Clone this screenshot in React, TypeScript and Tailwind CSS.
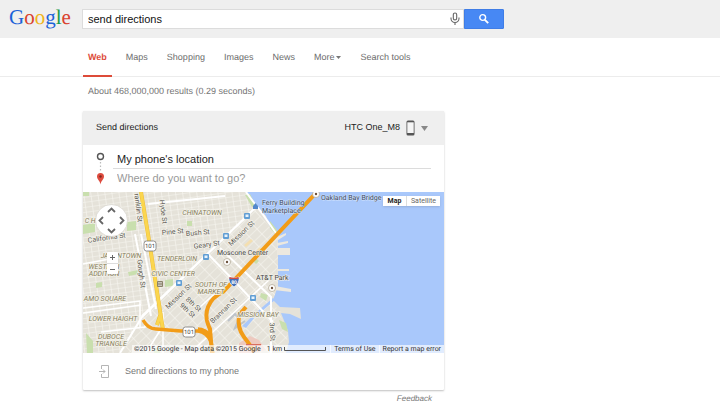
import React from "react";

interface Tab {
  label: string;
  active?: boolean;
  dropdown?: boolean;
}

interface MapLabel {
  text: string;
  x: number;
  y: number;
  rotate?: number;
}

const tabs: Tab[] = [
  { label: "Web", active: true },
  { label: "Maps" },
  { label: "Shopping" },
  { label: "Images" },
  { label: "News" },
  { label: "More", dropdown: true },
  { label: "Search tools" },
];

// Districts are drawn in italic olive
const districts: MapLabel[] = [
  { text: "CHINATOWN", x: 119, y: 23 },
  { text: "TENDERLOIN", x: 94, y: 69 },
  { text: "JAPANTOWN", x: 38, y: 66 },
  { text: "WESTERN", x: 21, y: 77 },
  { text: "ADDITION", x: 21, y: 84 },
  { text: "CIVIC CENTER", x: 90, y: 84 },
  { text: "SOUTH OF", x: 128, y: 95 },
  { text: "MARKET", x: 128, y: 102 },
  { text: "AMO SQUARE", x: 22, y: 109 },
  { text: "LOWER HAIGHT", x: 30, y: 129 },
  { text: "DUBOCE", x: 28, y: 147 },
  { text: "TRIANGLE", x: 28, y: 154 },
  { text: "MISSION BAY", x: 175, y: 125 },
  { text: "C HEI", x: 10, y: 31 },
];

const streets: MapLabel[] = [
  { text: "ranklin St", x: 53, y: 16, rotate: 83 },
  { text: "Hyde St", x: 78, y: 20, rotate: 83 },
  { text: "Gough St", x: 56, y: 82, rotate: 83 },
  { text: "Pine St", x: 90, y: 42, rotate: -5 },
  { text: "Bush St", x: 115, y: 43, rotate: -5 },
  { text: "Geary St", x: 124, y: 55, rotate: -8 },
  { text: "California St", x: 24, y: 48, rotate: -8 },
  { text: "Mission St", x: 160, y: 43, rotate: -44 },
  { text: "Mission St", x: 97, y: 106, rotate: -44 },
  { text: "Brannan St", x: 142, y: 120, rotate: -44 },
  { text: "8th St", x: 109, y: 114, rotate: 42 },
  { text: "9th St", x: 103, y: 120, rotate: 42 },
  { text: "3rd St", x: 187, y: 140, rotate: 87 },
];

const transitStops = [
  [164, 24],
  [143, 44],
  [123, 65],
  [96, 91],
  [170, 106],
];

const GoogleLogo = () => (
  <a
    href="#"
    aria-label="Google"
    className="block w-[82px] shrink-0 pb-[3px] pl-[9px] font-['Liberation_Serif',serif] text-[21px] leading-[35px]"
  >
    <span className="text-[#1b62d8]">G</span>
    <span className="text-[#d9422f]">o</span>
    <span className="text-[#f0b51c]">o</span>
    <span className="text-[#1b62d8]">g</span>
    <span className="text-[#1a9a4b]">l</span>
    <span className="text-[#d9422f]">e</span>
  </a>
);

const SearchBar = () => (
  <header className="flex h-[38px] items-center bg-[#efefef]">
    <GoogleLogo />
    <form className="flex h-5 min-w-0 grow pr-4" onSubmit={(e) => e.preventDefault()}>
      <div className="flex w-full max-w-[382px] items-center border border-[#dcdcdc] bg-white">
        <input
          type="text"
          aria-label="Search"
          defaultValue="send directions"
          className="min-w-0 grow pl-[5px] text-[11px] leading-4 text-[#111] outline-none"
        />
        <button type="button" aria-label="Search by voice" className="flex w-4 justify-center">
          <svg width="10" height="14" viewBox="0 0 10 14" fill="none" stroke="#666" strokeWidth="1.1">
            <rect x="3.3" y="1" width="3.4" height="7" rx="1.7" />
            <path d="M1 5.500v1a4 4 0 0 0 8 0v-1M5 10.500V13" />
          </svg>
        </button>
      </div>
      <button
        type="submit"
        aria-label="Google Search"
        className="flex w-10 shrink-0 items-center justify-center rounded-r-[1px] border border-[#3f7de6] bg-[#4788f4]"
      >
        <svg width="12" height="12" viewBox="0 0 12 12" fill="none" stroke="#fff">
          <circle cx="4.700" cy="4.500" r="2.900" strokeWidth="1.400" />
          <path d="M6.900 6.800l3.300 3.400" strokeWidth="1.900" />
        </svg>
      </button>
    </form>
  </header>
);

const Navigation = () => (
  <nav className="flex h-[39px] gap-[9px] border-b border-[#ececec] pl-[83px] text-[9px] text-[#6c6c6c]">
    {tabs.map((tab) => (
      <a
        key={tab.label}
        href="#"
        className={
          tab.active
            ? "flex h-[39px] items-center border-b-2 border-[#dd4b39] px-[5px] pt-[2px] font-bold text-[#dd4b39]"
            : "flex h-[39px] items-center border-b-2 border-transparent px-[5px] pt-[2px]"
        }
      >
        {tab.label}
        {tab.dropdown && (
          <svg className="ml-[2px]" width="5" height="3" viewBox="0 0 5 3">
            <path d="M0 0h5L2.500 3z" fill="#777" />
          </svg>
        )}
      </a>
    ))}
  </nav>
);

const MapDrawing = () => (
  <svg
    className="block h-full w-full"
    viewBox="0 0 361 161"
    preserveAspectRatio="xMinYMin slice"
    fontFamily="Roboto, sans-serif"
    role="img"
    aria-label="Map of San Francisco"
  >
    <defs>
      <pattern id="blocks" width="7" height="5" patternUnits="userSpaceOnUse" patternTransform="rotate(-8)">
        <path d="M0 0h7M0 0v5" stroke="#f8f7f2" strokeWidth="1.2" />
      </pattern>
      <pattern id="soma" width="11" height="7" patternUnits="userSpaceOnUse" patternTransform="rotate(-44)">
        <path d="M0 0h11M0 0v7" stroke="#f8f7f2" strokeWidth="1.2" />
      </pattern>
    </defs>

    {/* water and land */}
    <rect width="361" height="161" fill="#a9c8fb" />
    <path
      d="M0 0H163L168 10L174 14L183 24L186 33L192 38L195 46V94L190 108L197 115L217 116L218 127L207 122L198 121L202 131L205 139L206 150L203 161H0Z"
      fill="#e5e2d9"
    />
    <path d="M0 0H163L174 17L57 127L40 161H0Z" fill="url(#blocks)" />
    <path d="M57 127L172 17L195 46V94L190 108L205 140L203 161H40Z" fill="url(#soma)" />
    <g fill="#ece8df">
      <path d="M194 45l9-4v2l-8 5zM194 51l11-2v2l-11 3zM194 56h13v7h-13zM194 77h12v2h-12zM194 86h9v2h-9zM192 94l16 3v3l-17-2z" />
    </g>

    {/* parks */}
    <g fill="#c9dfae">
      <path d="M0 33l12-2v9l-12 2zM44 30l9-1v9l-9 1zM45 80l10-2v4l-9 2zM13 91l6-1v5l-6 1zM82 88l8-1v7l-8 1zM104 29h5v5h-5zM178 101l7 2-2 6-6-4zM3 141l7 8v12h-6zM162 3l5-1 6 12-4 1zM0 0h6v4H0zM187 29l7 9v6l-7-8z" />
      <path d="M196 128l7 3 2 9-6-3zM170 69l3-3 3 3-3 3zM71 156h6v5h-6z" />
    </g>
    <path d="M156 151l11-7 9 4 7 10-12 3h-15z" fill="#edc9bf" />
    <path d="M161 53l7-6 2 2-7 6zM172 60l5-5 2 2-5 5z" fill="#f4dfb0" />
    <path d="M159 134l17-16 14-12 2 2-20 17-9 11z" fill="#a9c8fb" />
    <path d="M145 129l7-7 4 5-4 9 10-7" fill="none" stroke="#bdc3c9" strokeWidth="2" />

    {/* main streets */}
    <g fill="none" stroke="#fff" strokeWidth="2">
      <path d="M37 161L59 125L110 76L172 16M163 0l18 24 14 20M125 62l31 32 34 36M137 56l51 49v56M59 124L162 26M65 12l77-8M52 42l16 82M58 42l15 75" />
      <path d="M0 116l57-7v26M0 121l58-8M18 140l44-5v-7M80 120v41M63 161l15-24M107 161l79-73M116 116l24-22M0 72l58-11" strokeWidth="1.500" />
    </g>

    {/* highways */}
    <path d="M58 0l7 42 15 96M78 121l-4 12" fill="none" stroke="#edbd3d" strokeWidth="4" />
    <path d="M58 0l7 42 15 96M78 121l-4 12" fill="none" stroke="#fbd64e" strokeWidth="3" />
    <g fill="none" stroke="#f29c18" strokeLinejoin="round">
      <path d="M60 128q5 9 13 9l25 2h17q9 1 13 11l2 11M115 137q7 0 13 7" strokeWidth="3.500" />
      <path d="M129 161l-2-24q-6-12-2-22t15-15L233 1" strokeWidth="4" />
      <path d="M163 115l-7 8q-2 13 5 22t10 15" strokeWidth="4" />
    </g>
    <path d="M163 152h15v2h-15z" fill="#d96c5d" />

    {/* transit stops */}
    {transitStops.map(([x, y]) => (
      <g key={`${x}-${y}`}>
        <rect x={x - 3} y={y - 3} width="6" height="6" rx="1" fill="#619ed4" />
        <path d={`M${x - 1.5} ${y - 1.5}h3v2.500h-3z`} fill="#e7f2fc" />
      </g>
    ))}
    <path d="M170 14l2.500-3 2.500 3v3h-5z" fill="#5288cb" />
    <rect x="74" y="89" width="6" height="6" rx="1" fill="#8a8268" />
    <path d="M75 90.500h4M75 92h4M75 93.500h4" stroke="#eee" strokeWidth=".6" />

    {/* labels */}
    <g
      fontSize="7"
      fontStyle="italic"
      fill="#857c59"
      stroke="#f4f2ea"
      strokeWidth="1.500"
      paintOrder="stroke"
      textAnchor="middle"
    >
      {districts.map((label) => (
        <text key={label.text} x={label.x} y={label.y}>
          {label.text}
        </text>
      ))}
    </g>
    <g fontSize="7" fill="#5c5a55" stroke="#f4f2ea" strokeWidth="1.500" paintOrder="stroke" textAnchor="middle">
      {streets.map((label) => (
        <text
          key={`${label.text}-${label.x}`}
          x={label.x}
          y={label.y}
          transform={`rotate(${label.rotate} ${label.x} ${label.y})`}
        >
          {label.text}
        </text>
      ))}
    </g>
    <g fontSize="7" fill="#444" stroke="#f4f2ea" strokeWidth="1" paintOrder="stroke">
      <text x="134" y="63">Moscone Center</text>
      <text x="173" y="88">AT&amp;T Park</text>
    </g>
    <g fontSize="7" fill="#3a4a60" stroke="#d2e2fc" strokeWidth="1" paintOrder="stroke">
      <text x="179" y="13">Ferry Building</text>
      <text x="179" y="21">Marketplace</text>
      <text x="238" y="8">Oakland Bay Bridge</text>
    </g>
    {[[144, 70], [189, 96], [233, 2]].map(([x, y]) => (
      <g key={x}>
        <circle cx={x} cy={y} r="3.500" fill="#fff" stroke="#aaa08d" strokeWidth=".7" />
        <circle cx={x} cy={y} r="1.200" fill="#6b503b" />
      </g>
    ))}

    {/* road shields */}
    {[[67, 54], [106, 140]].map(([x, y]) => (
      <g key={x}>
        <rect x={x - 6} y={y - 5} width="12" height="10" rx="2.500" fill="#fff" stroke="#777" strokeWidth=".8" />
        <text x={x} y={y + 2} fontSize="6" fill="#444" textAnchor="middle">
          101
        </text>
      </g>
    ))}
    <path d="M146 85q5 2 10 0 1 6-5 10-6-4-5-10z" fill="#4670b7" stroke="#fff" strokeWidth=".7" />
    <path d="M146.500 85q4.500 1.500 9 0v2h-9z" fill="#cf4f45" />
    <text x="151" y="92" fontSize="5" fontWeight="700" fill="#fff" textAnchor="middle">
      80
    </text>
  </svg>
);

const MapPanel = () => (
  <div className="relative h-[161px] overflow-hidden font-[Roboto,sans-serif] text-[7px] text-[#333]">
    <MapDrawing />

    {/* controls that float above the map */}
    <button type="button" aria-label="Pan the map" className="absolute top-[12px] left-[12px]">
      <svg width="33" height="33" viewBox="0 0 33 33" fill="none">
        <circle cx="16.500" cy="16.500" r="16" fill="#fff" stroke="#d5d3cc" strokeWidth=".7" />
        <path
          d="M13 8l3.500-3.500L20 8M13 25l3.500 3.500L20 25M8 13l-3.500 3.500L8 20M25 13l3.500 3.500L25 20"
          stroke="#666"
          strokeWidth="1.800"
        />
      </svg>
    </button>
    <div className="absolute top-[60px] left-6 flex w-[11px] flex-col rounded-[1px] bg-white shadow-sm">
      <button type="button" aria-label="Zoom in" className="flex h-[11px] items-center justify-center">
        <svg width="5" height="5" viewBox="0 0 5 5" stroke="#666">
          <path d="M0 2.500h5M2.500 0v5" />
        </svg>
      </button>
      <button
        type="button"
        aria-label="Zoom out"
        className="flex h-[11px] items-center justify-center border-t border-[#ddd]"
      >
        <svg width="5" height="5" viewBox="0 0 5 5" stroke="#666">
          <path d="M0 2.500h5" />
        </svg>
      </button>
    </div>
    <div className="absolute top-1 right-1 flex h-[10px] bg-white leading-[10px] shadow-sm">
      <button type="button" className="w-[23px] font-bold text-[#222]">
        Map
      </button>
      <button type="button" className="w-[34px] border-l border-[#ddd] text-[#666]">
        Satellite
      </button>
    </div>
    <div className="absolute right-0 bottom-0 flex h-2 items-center bg-white/65 pl-[2px] leading-2 whitespace-nowrap">
      <span>©2015 Google - Map data ©2015 Google</span>
      <span className="pl-[6px]">1 km</span>
      <svg className="ml-[2px]" width="42" height="4" viewBox="0 0 42 4" fill="none" stroke="#555">
        <path d="M.5 0v3.500h41V0" />
      </svg>
      <a href="#" className="ml-1 border-l border-white/70 px-[3px]">
        Terms of Use
      </a>
      <a href="#" className="border-l border-white/70 px-[3px]">
        Report a map error
      </a>
    </div>
  </div>
);

const DirectionsCard = () => (
  <section className="rounded-[1px] bg-white shadow-[0_1px_2px_rgba(0,0,0,0.25)]">
    <div className="flex h-[34px] items-center justify-between bg-[#efefef] pr-4 pl-[13px] text-[#222]">
      <h2 className="text-[9px]">Send directions</h2>
      <button type="button" className="flex items-center text-[9px]">
        HTC One_M8
        <svg className="ml-[6px]" width="9" height="16" viewBox="0 0 9 16">
          <rect x=".5" y=".5" width="8" height="15" rx="1.500" fill="#555" />
          <path d="M1.300 2.300h6.400v10.700h-6.400z" fill="#f5f5f5" />
        </svg>
        <svg className="ml-[6px]" width="7" height="5" viewBox="0 0 7 5">
          <path d="M0 0h7L3.500 5z" fill="#888" />
        </svg>
      </button>
    </div>

    <div className="flex h-[47px] pr-[13px] pl-[13px]">
      <svg className="mt-[7px] shrink-0" width="9" height="34" viewBox="0 0 9 34">
        <circle cx="4.500" cy="4.500" r="3" fill="none" stroke="#555" strokeWidth="1.400" />
        <path d="M4.500 10v9" stroke="#bbb" strokeWidth="1.200" strokeDasharray="1.500 2" />
        <path d="M4.500 32.500C4 28.500 1 27.500 1 24.500a3.500 3.500 0 0 1 7 0c0 3-3 4-3.500 8z" fill="#dd4b3e" />
        <circle cx="4.500" cy="24.500" r="1.200" fill="#7e2720" />
      </svg>
      <div className="ml-2 flex min-w-0 grow flex-col pt-1">
        <input
          type="text"
          aria-label="Starting point"
          defaultValue="My phone's location"
          className="h-5 border-b border-[#dcdcdc] pl-1 text-[11px] text-[#222] outline-none"
        />
        <input
          type="text"
          aria-label="Destination"
          placeholder="Where do you want to go?"
          className="h-[18px] pl-1 text-[11px] outline-none placeholder:text-[#9a9a9a]"
        />
      </div>
    </div>

    <MapPanel />

    <button type="button" className="flex h-[37px] w-full items-center pl-4 text-[9px] text-[#777]">
      <svg className="mr-4" width="10" height="13" viewBox="0 0 10 13" fill="none" stroke="#b5b5b5">
        <path d="M2.500 4V.5h7v12h-7V9M0 6.500h6M4 4.500l2 2-2 2" />
      </svg>
      Send directions to my phone
    </button>
  </section>
);

export default function App() {
  return (
    <div className="min-h-screen bg-white font-['Liberation_Sans',Arial,sans-serif] [text-rendering:geometricPrecision]">
      <SearchBar />
      <Navigation />
      <main className="pr-4 pl-[83px]">
        <p className="pt-2 pb-[14px] pl-[5px] text-[9px] leading-3 text-[#757575]">
          About 468,000,000 results (0.29 seconds)
        </p>
        <div className="max-w-[361px]">
          <DirectionsCard />
          <div className="pt-[5px] pr-3 text-right text-[8px] leading-2 text-[#777] italic">
            <a href="#">Feedback</a>
          </div>
        </div>
      </main>
    </div>
  );
}
